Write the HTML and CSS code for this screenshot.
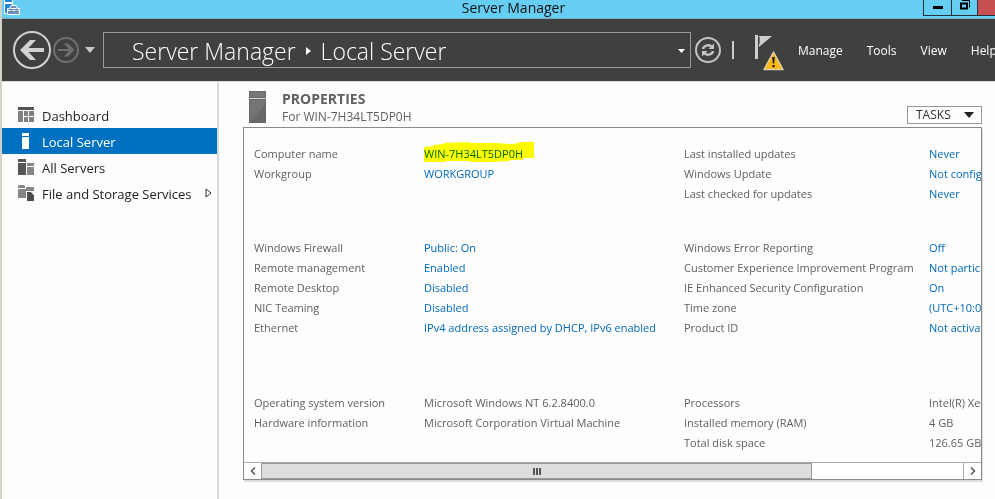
FILE: index.html
```html
<!DOCTYPE html>
<html lang="en">
<head>
<meta charset="utf-8">
<title>Server Manager</title>
<link rel="stylesheet" href="styles.css">
</head>
<body>
<div class="window">
  <header class="titlebar">
    <svg class="app-icon" width="18" height="16" viewBox="0 0 18 16" aria-hidden="true">
      <rect x="0" y="-1" width="9" height="15" fill="#fff"/>
      <rect x="1" y="0" width="7" height="2" fill="#1e87dc"/>
      <rect x="1" y="4" width="7" height="9" fill="#1e87dc"/>
      <path d="M3.500 8.500h2l1.500-3h5l1.500 3h2v6h-12z" fill="#7191b5" stroke="#fff"/>
      <path d="M6.500 8.500h6M3.500 10.500h3m2 0h3m2 0h2" fill="none" stroke="#fff"/>
    </svg>
    <h1 class="window-title">Server Manager</h1>
    <div class="caption">
      <button class="cap cap-min" type="button" aria-label="Minimize"><svg width="10" height="14" viewBox="0 0 10 14"><path d="M0 7.500h10" stroke="#000" stroke-width="3"/></svg></button>
      <button class="cap cap-max" type="button" aria-label="Restore"><svg width="10" height="14" viewBox="0 0 10 14"><path d="M1 3.500h6v5H1z" fill="none" stroke="#000" stroke-width="2"/><path d="M2 .5h7.500v7" fill="none" stroke="#000"/></svg></button>
      <button class="cap cap-close" type="button" aria-label="Close"></button>
    </div>
  </header>

  <div class="toolbar">
    <button class="icon-btn back" type="button" aria-label="Back">
      <svg width="40" height="40" viewBox="0 0 40 40"><circle cx="20" cy="20" r="18" fill="none" stroke="#d2d2d2" stroke-width="2"/><path d="M32 18H16.500l7.500-8h-6L8 20l10 10h6l-7.500-8H32z" fill="#d2d2d2"/></svg>
    </button>
    <button class="icon-btn" type="button" aria-label="Forward">
      <svg width="28" height="28" viewBox="0 0 28 28"><circle cx="14" cy="14" r="12" fill="none" stroke="#707070" stroke-width="2"/><path d="M6 13h11l-5-5.500h4l6.500 6.500-6.500 6.500h-4l5-5.500H6z" fill="#707070"/></svg>
    </button>
    <button class="icon-btn history" type="button" aria-label="History">
      <svg width="10" height="6" viewBox="0 0 10 6"><path d="M0 0h10L5 6z" fill="#c8c8c8"/></svg>
    </button>
    <nav class="crumbs" aria-label="Breadcrumb">
      <a href="#">Server Manager</a>
      <svg width="5" height="8" viewBox="0 0 5 8" aria-hidden="true"><path d="M0 0l5 4-5 4z" fill="#fff"/></svg>
      <a href="#">Local Server</a>
      <button class="icon-btn crumb-drop" type="button" aria-label="Show locations"><svg width="7" height="4" viewBox="0 0 7 4"><path d="M0 0h7L3.500 4z" fill="#fff"/></svg></button>
    </nav>
    <div class="tools">
      <button class="icon-btn" type="button" aria-label="Refresh">
        <svg width="26" height="26" viewBox="0 0 26 26"><circle cx="13" cy="13" r="12" fill="none" stroke="#c4c4c4" stroke-width="2"/><path d="M8 12a5 4 0 0 1 8.500-2.500M18 14a5 4 0 0 1-8.500 2.500" fill="none" stroke="#c4c4c4" stroke-width="2.400"/><path d="M19 6.500V12h-5.500zM7 19.500V14h5.500z" fill="#c4c4c4"/></svg>
      </button>
      <span class="divider"></span>
      <button class="icon-btn flag" type="button" aria-label="Notifications">
        <svg width="30" height="36" viewBox="0 0 30 36"><path d="M0 0h3v24H0zM4 1h13L4 12z" fill="#cfcfcf"/><path d="M4.500 2v7" stroke="#777"/><path d="M18.500 17L28 34.500H9z" fill="#fdb813" stroke="#ddd0a8" stroke-width="1.500" stroke-linejoin="round"/><path d="M17.200 22h2.600l-.6 6.500h-1.400zM17.400 30h2.200v2.300h-2.200z" fill="#1a1a1a"/></svg>
      </button>
      <nav class="menu" aria-label="Main menu">
        <a href="#">Manage</a><a href="#">Tools</a><a href="#">View</a><a href="#">Help</a>
      </nav>
    </div>
  </div>

  <div class="body">
    <nav class="sidebar" aria-label="Servers">
      <a class="nav-item" href="#">
        <svg width="16" height="16" viewBox="0 0 16 16"><path d="M0 0h16v3H0z" fill="#555"/><path d="M0 4h5v11H0zM6 4h4v5H6zM11 4h5v5h-5zM6 10h4v5H6zM11 10h5v5h-5z" fill="#808080"/></svg>
        <span>Dashboard</span></a>
      <a class="nav-item selected" href="#" aria-current="page">
        <svg width="16" height="16" viewBox="0 0 16 16"><path d="M4 0h7v3H4zM4 4h7v12H4z" fill="#fff"/></svg>
        <span>Local Server</span></a>
      <a class="nav-item" href="#">
        <svg width="16" height="16" viewBox="0 0 16 16"><path d="M0 0h8v3H0zM0 4h8v12H0z" fill="#555"/><path d="M9 4h7v3H9zM9 8h7v8H9z" fill="#858585"/></svg>
        <span>All Servers</span></a>
      <a class="nav-item" href="#">
        <svg width="16" height="16" viewBox="0 0 16 16"><path d="M1 0h5l1 1v2H0V1zM0 4h8V2h8v4H8v7H0z" fill="#858585"/><path d="M9 7h4l3 3v6H9z" fill="#4d4d4d"/><path d="M13 6.500l3 3.500" fill="none" stroke="#ddd"/></svg>
        <span>File and Storage Services</span>
        <svg class="expand" width="7" height="10" viewBox="0 0 7 10"><path d="M1 1l5 4-5 4z" fill="none" stroke="#333"/></svg></a>
    </nav>

    <main class="content">
      <div class="section-head">
        <svg width="17" height="32" viewBox="0 0 17 32" aria-hidden="true"><path d="M0 0h17v32H0z" fill="#686868"/><path d="M1 1h15v5H1z" fill="#777"/><path d="M0 7.500h17" stroke="#d8d8d8"/><path d="M1 31V9h15v5z" fill="#747474"/></svg>
        <div class="headings">
          <h2>PROPERTIES</h2>
          <p>For WIN-7H34LT5DP0H</p>
        </div>
        <button class="tasks" type="button">TASKS <svg width="10" height="6" viewBox="0 0 10 6"><path d="M0 0h10L5 6z" fill="#222"/></svg></button>
      </div>

      <section class="panel" aria-label="Properties">
        <div class="viewport">
          <table class="props">
            <colgroup><col class="c-label"><col class="c-value"><col class="c-label2"><col class="c-value2"></colgroup>
            <tbody>
              <tr><th scope="row">Computer name</th><td><a class="marked" href="#">WIN-7H34LT5DP0H<svg class="marker" width="110" height="21" viewBox="0 0 110 21" aria-hidden="true"><path d="M0 5l10-1V3l9-1 1-1 26-1v1h26l16 1 7-1V0h15v16H99v2H86v1l-18 1H46v-1H22v1H0z" fill="#ff0"/></svg></a></td><th scope="row">Last installed updates</th><td><a href="#">Never</a></td></tr>
              <tr><th scope="row">Workgroup</th><td><a href="#">WORKGROUP</a></td><th scope="row">Windows Update</th><td><a href="#">Not configured</a></td></tr>
              <tr><th></th><td></td><th scope="row">Last checked for updates</th><td><a href="#">Never</a></td></tr>
            </tbody>
            <tbody class="group-mid">
              <tr><th scope="row">Windows Firewall</th><td><a href="#">Public: On</a></td><th scope="row">Windows Error Reporting</th><td><a href="#">Off</a></td></tr>
              <tr><th scope="row">Remote management</th><td><a href="#">Enabled</a></td><th scope="row">Customer Experience Improvement Program</th><td><a href="#">Not participating</a></td></tr>
              <tr><th scope="row">Remote Desktop</th><td><a href="#">Disabled</a></td><th scope="row">IE Enhanced Security Configuration</th><td><a href="#">On</a></td></tr>
              <tr><th scope="row">NIC Teaming</th><td><a href="#">Disabled</a></td><th scope="row">Time zone</th><td><a href="#">(UTC+10:00)</a></td></tr>
              <tr><th scope="row">Ethernet</th><td><a href="#">IPv4 address assigned by DHCP, IPv6 enabled</a></td><th scope="row">Product ID</th><td><a href="#">Not activated</a></td></tr>
            </tbody>
            <tbody class="group-end">
              <tr><th scope="row">Operating system version</th><td>Microsoft Windows NT 6.2.8400.0</td><th scope="row">Processors</th><td>Intel(R) Xeon(R)</td></tr>
              <tr><th scope="row">Hardware information</th><td>Microsoft Corporation Virtual Machine</td><th scope="row">Installed memory (RAM)</th><td>4 GB</td></tr>
              <tr><th></th><td></td><th scope="row">Total disk space</th><td>126.65 GB</td></tr>
            </tbody>
          </table>
        </div>
        <div class="scrollbar">
          <button type="button" aria-label="Scroll left"><svg width="6" height="8" viewBox="0 0 6 8"><path d="M5 .5L1.500 4 5 7.500" fill="none" stroke="#555" stroke-width="1.500"/></svg></button>
          <div class="track"><div class="thumb"><svg width="8" height="7" viewBox="0 0 8 7"><path d="M1 0v7M4 0v7M7 0v7" stroke="#555" stroke-width="2"/></svg></div></div>
          <button type="button" aria-label="Scroll right"><svg width="6" height="8" viewBox="0 0 6 8"><path d="M1 .5L4.500 4 1 7.500" fill="none" stroke="#555" stroke-width="1.500"/></svg></button>
        </div>
      </section>
    </main>
  </div>
</div>
</body>
</html>
```
FILE: styles.css
```css
* { box-sizing: border-box; }
html, body { height: 100%; }
body {
  margin: 0;
  overflow: hidden;
  background: #fdfdfd;
  color: #606060;
  font: 12px/20px "Open Sans", "Noto Sans", sans-serif;
}
h1, h2, p { margin: 0; }
a { color: #0068bd; text-decoration: none; }
button {
  margin: 0;
  padding: 0;
  border: 0;
  background: none;
  font: inherit;
  color: inherit;
}
svg { display: block; flex: none; }

.window {
  display: flex;
  flex-direction: column;
  min-height: 100%;
  border-left: 2px solid #d4d0c8;
}

/* Title bar */
.titlebar {
  display: flex;
  align-items: flex-start;
  height: 19px;
  padding-left: 2px;
  background: #66cdf3;
  border-bottom: 1px solid #79a9c4;
}
.window-title {
  flex: 1;
  padding-left: 82px;
  color: #111;
  font-size: 14px;
  font-weight: 400;
  line-height: 16px;
  text-align: center;
}
.caption { display: flex; }
.cap {
  display: flex;
  justify-content: center;
  height: 16px;
  border: 1px solid #26323a;
  border-top: 0;
}
.cap-min { width: 29px; }
.cap-max { width: 26px; border-left: 0; }
.cap-close { width: 17px; border-left: 0; border-right: 0; background: #c75050; }

/* Navigation bar */
.toolbar {
  display: flex;
  align-items: center;
  height: 62px;
  padding-left: 10px;
  background: #404040;
}
.icon-btn { display: flex; flex: none; align-items: center; justify-content: center; }
.history { justify-content: flex-start; width: 23px; padding-left: 5px; }
.crumbs {
  display: flex;
  flex: 1;
  align-items: center;
  gap: 10px;
  height: 36px;
  padding: 2px 5px 0 28px;
  border: 1px solid #999;
  white-space: nowrap;
}
.crumbs a { color: #fff; font-size: 23px; font-weight: 300; line-height: 34px; }
.crumb-drop { margin-left: auto; }
.tools {
  display: flex;
  flex: 0 0 304px;
  align-items: center;
  padding-left: 4px;
  overflow: hidden;
}
.divider { flex: none; width: 2px; height: 18px; margin: 0 21px 0 11px; background: #ccc; }
.flag { height: 36px; margin-top: 6px; }
.menu { display: flex; gap: 24px; padding: 2px 0 0 13px; }
.menu a { color: #fff; font-size: 12px; }

/* Sidebar */
.body { display: flex; flex: 1; }
.sidebar {
  flex: 0 0 217px;
  padding-top: 20px;
  border-right: 2px solid #d9d9d9;
  border-top: 1px solid #ddd;
}
.nav-item {
  display: flex;
  align-items: center;
  gap: 8px;
  height: 26px;
  padding-left: 16px;
  color: #222;
  font-size: 13px;
  white-space: nowrap;
}
.nav-item span { padding-top: 2px; }
.nav-item.selected { background: #0070c0; color: #fff; }
.expand { margin: 0 5px 0 auto; }

/* Properties */
.content {
  flex: 1;
  min-width: 0;
  padding: 9px 13px 0 24px;
  border-top: 1px solid #ddd;
}
.section-head { display: flex; padding-left: 6px; height: 36px; }
.headings { flex: 1; padding-left: 16px; }
.headings h2 { font-size: 14px; font-weight: 700; line-height: 16px; }
.headings p { line-height: 20px; }
.tasks {
  display: flex;
  align-items: center;
  justify-content: space-between;
  width: 75px;
  height: 18px;
  margin-top: 15px;
  padding: 0 7px 0 8px;
  border: 1px solid #999;
  color: #333;
}
.panel {
  border: 1px solid #8a8a8a;
  box-shadow: 1px 2px 0 #dedede;
}
.viewport { padding: 16px 0 9px 10px; overflow: hidden; }
.props { width: 735px; border-collapse: collapse; table-layout: fixed; font-size: 11px; }
.c-label { width: 170px; }
.c-value { width: 260px; }
.c-label2 { width: 245px; }
.props th, .props td {
  height: 20px;
  padding: 0;
  font-weight: 400;
  text-align: left;
  white-space: nowrap;
}
.group-mid tr:first-child > * { height: 54px; padding-top: 34px; }
.group-end tr:first-child > * { height: 75px; padding-top: 55px; }
.marked { position: relative; }
.marker { position: absolute; left: 0; top: -4px; mix-blend-mode: multiply; }

.scrollbar { display: flex; height: 17px; border-top: 1px solid #aaa; background: #fff; }
.scrollbar button { display: flex; align-items: center; justify-content: center; width: 17px; }
.track { flex: 1; border-right: 1px solid #aaa; }
.thumb {
  display: flex;
  align-items: center;
  justify-content: center;
  width: 78.5%;
  height: 16px;
  border: 1px solid #999;
  background: #ddd;
}
```
